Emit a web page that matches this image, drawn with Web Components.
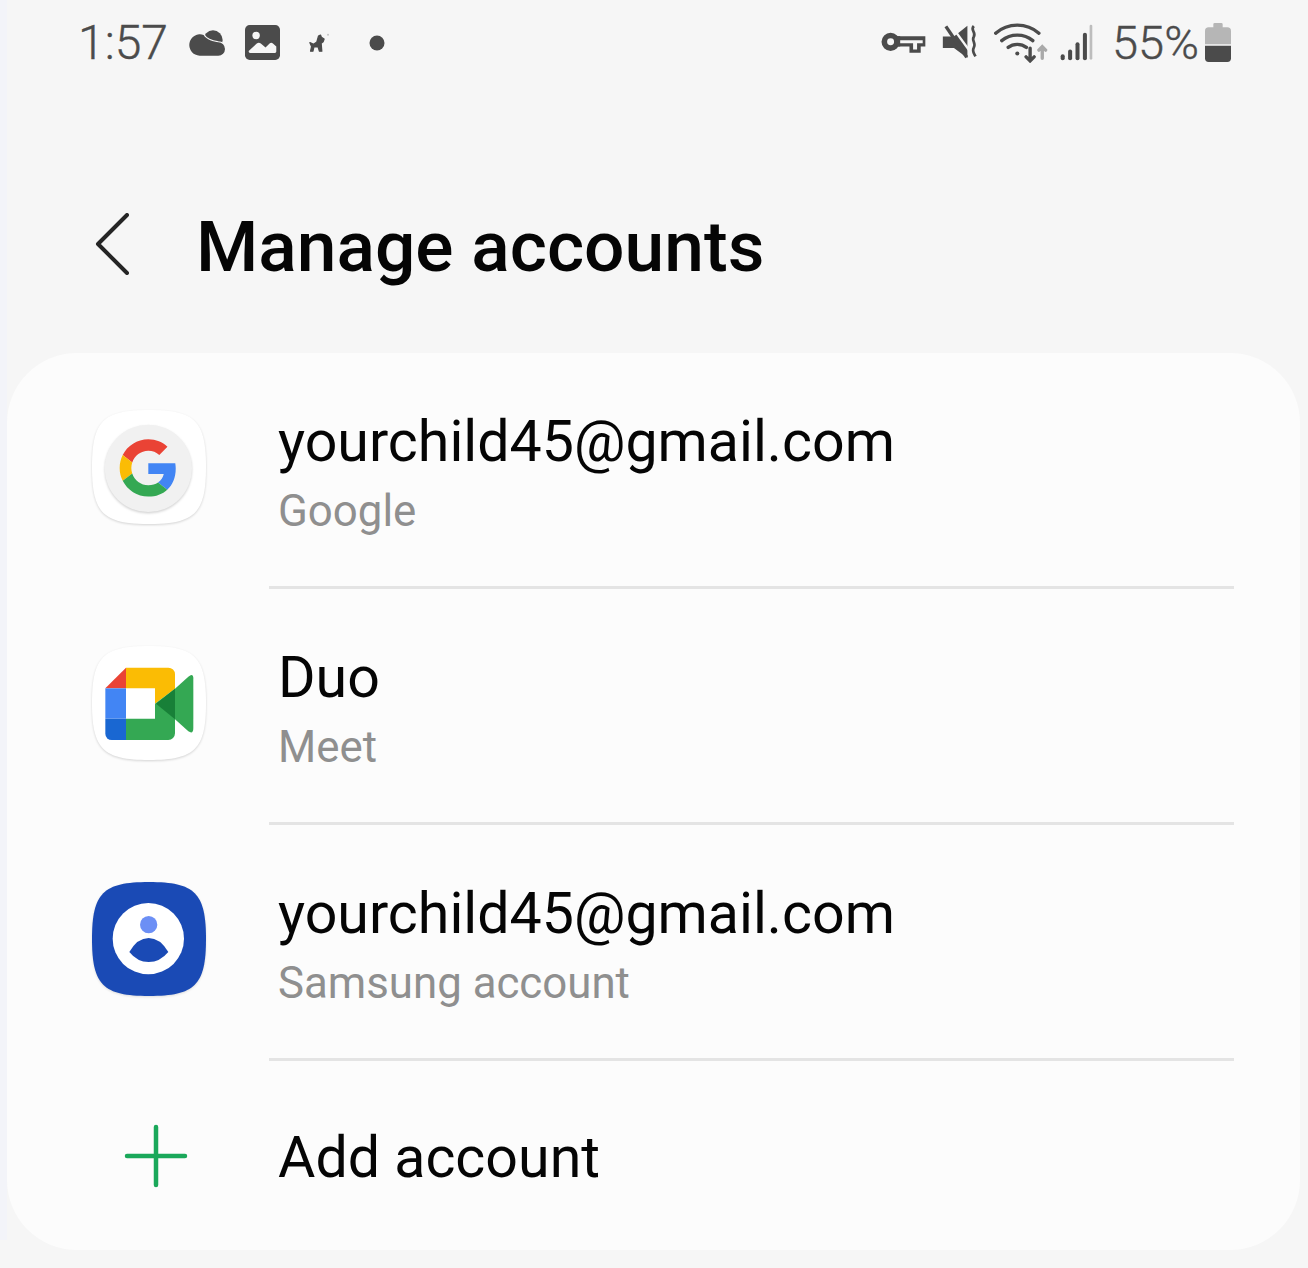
<!DOCTYPE html>
<html lang="en">
<head>
<meta charset="utf-8">
<title>Manage accounts</title>
<style>
  html, body { margin: 0; padding: 0; background: #f6f6f6; }
  body { width: 1308px; height: 1268px; overflow: hidden; font-family: Roboto, "Liberation Sans", sans-serif; background: linear-gradient(#f3f4f9, #f3f4f9) 0 0 / 7px 1240px no-repeat #f6f6f6; }
</style>
</head>
<body>
<template id="status-tmpl">
  <style>
    :host { display: flex; justify-content: space-between; align-items: center; height: 85px; padding: 0 77px 0 78px; color: #4b4b4b; }
    .group { display: flex; align-items: center; }
    .text { font-size: 48px; font-weight: 300; line-height: 85px; -webkit-text-stroke: 0.4px #4b4b4b; }
    svg { display: block; flex: none; }
  </style>
  <div class="group">
    <span class="text" style="width:110px">1:57</span>
    <svg width="37" height="26" viewBox="385 58 111 78" fill="#4b4b4b">
      <circle cx="460" cy="88" r="29"/>
      <path d="M420 135a32 32 0 1 1 12-62c8 14 30 20 44 22a20 20 0 0 1 0 40z" stroke="#f6f6f6" stroke-width="7" paint-order="stroke"/>
    </svg>
    <svg style="margin-left:20px" width="35" height="35" viewBox="557 47 104 104">
      <rect x="557" y="47" width="104" height="104" rx="14" fill="#4b4b4b"/>
      <circle cx="590" cy="78" r="11" fill="#f6f6f6"/>
      <path d="M568 124l24-22q6-5 12 0l14 12 12-12q5-4 10 0l10 9v15a4 4 0 0 1-4 4h-74a4 4 0 0 1-4-4z" fill="#f6f6f6"/>
    </svg>
    <svg style="margin-left:27px" width="23" height="22" viewBox="200 38 70 66" fill="#4b4b4b">
      <path d="M209 70l11 5 10-7 5-18 6-3 3 7 8 5-3 8-6 5 2 24h-7l-4-13h-13l-3 13h-7l3-14z" stroke="#4b4b4b" stroke-width="4" stroke-linejoin="round"/>
      <circle cx="264" cy="46" r="3" fill="#c4c4c4"/>
    </svg>
    <svg style="margin-left:39px" width="16" height="16" viewBox="0 0 16 16"><circle cx="8" cy="8" r="7.5" fill="#4b4b4b"/></svg>
  </div>
  <div class="group">
    <svg width="45" height="23" viewBox="18 38 136 68">
      <path d="M66 53H152V84H138V103H104V84H66Z" fill="#4b4b4b"/>
      <circle cx="47" cy="70" r="19" fill="#f6f6f6" stroke="#4b4b4b" stroke-width="17"/>
      <path d="M70 65H144V74H127V93H115V74H70Z" fill="#f6f6f6"/>
      <path d="M66 53H76V84H66Z" fill="#4b4b4b"/>
    </svg>
    <svg style="margin-left:16px" width="36" height="35" viewBox="203 22 106 104" fill="#4b4b4b">
      <path d="M205 56H238L278 24V120L238 90H205Z"/>
      <path d="M230 24L294 112" stroke="#f6f6f6" stroke-width="7" fill="none"/>
      <path d="M214 26L276 118" stroke="#4b4b4b" stroke-width="10" fill="none"/>
      <path d="M297 25c-12 12 8 18 0 32c-8 12 8 18 0 32c-6 10 0 16 5 26" stroke="#4b4b4b" stroke-width="8" fill="none"/>
    </svg>
    <svg style="margin-left:16px" width="54" height="40" viewBox="375 38 160 118" fill="none" stroke="#4b4b4b" stroke-width="10" stroke-linecap="round">
      <path d="M380 68c36-32 92-32 128 0"/>
      <path d="M398 90c26-22 66-22 92 0"/>
      <path d="M417 110c15-12 39-12 54 0"/>
      <circle cx="444" cy="128" r="6" fill="#4b4b4b" stroke="none"/>
      <path d="M482 112v36M470 138l12 12 12-12"/>
      <path d="M518 142v-34M508 118l10-10 10 10" stroke="#a9a9a9"/>
    </svg>
    <svg style="margin-left:12px" width="33" height="37" viewBox="570 42 98 110" fill="none" stroke-width="12" stroke-linecap="round">
      <path d="M578 138v6" stroke="#4b4b4b"/>
      <path d="M600 124v20" stroke="#4b4b4b"/>
      <path d="M622 102v42" stroke="#4b4b4b"/>
      <path d="M644 74v70" stroke="#4b4b4b"/>
      <path d="M662 48v96" stroke="#bdbdbd" stroke-width="8"/>
    </svg>
    <span class="text" style="margin-left:19px;width:93px;font-size:47px">55%</span>
    <svg width="26" height="39" viewBox="1005 40 78 117">
      <path d="M1032 40h22a4 4 0 0 1 4 4v9h14a11 11 0 0 1 11 11v40h-78V64a11 11 0 0 1 11-11h14v-9a4 4 0 0 1 4-4z" fill="#b6b6b6"/>
      <path d="M1005 108h78v38a11 11 0 0 1-11 11h-56a11 11 0 0 1-11-11z" fill="#4b4b4b"/>
    </svg>
  </div>
</template>

<template id="header-tmpl">
  <style>
    :host { display: flex; align-items: center; height: 268px; box-sizing: border-box; padding: 50px 0 0 94px; }
    svg { display: block; flex: none; }
    h1 { margin: 6px 0 0 66px; font-size: 71.3px; font-weight: 500; color: #050505; line-height: 80px; white-space: nowrap; }
  </style>
  <svg width="36" height="62" viewBox="0 0 36 62" fill="none" stroke="#252525" stroke-width="4" stroke-linecap="round" stroke-linejoin="round">
    <path d="M33 2L4 31l29 29"/>
  </svg>
  <h1><slot></slot></h1>
</template>

<template id="card-tmpl">
  <style>
    :host { display: block; margin: 0 8px 0 7px; height: 897px; box-sizing: border-box; background: #fcfcfc; border-radius: 70px; overflow: hidden; }
  </style>
  <slot></slot>
</template>

<template id="row-tmpl">
  <style>
    :host { display: flex; height: 236px; box-sizing: border-box; padding-left: 85px; }
    :host([last]) { height: 190px; }
    .icon { flex: none; width: 114px; display: flex; justify-content: center; align-items: flex-start; padding-top: 57px; }
    .body { flex: 1; margin: 0 66px 0 63px; padding: 56px 0 0 9px; border-bottom: 3px solid #e4e4e4; box-sizing: border-box; }
    :host([last]) .body { border-bottom: none; padding-top: 64px; }
    .title { font-size: 57.3px; line-height: 66px; color: #050505; white-space: nowrap; }
    .sub { font-size: 43.8px; line-height: 52px; margin-top: 10px; color: #8f8f8f; white-space: nowrap; }
    ::slotted(svg) { display: block; overflow: visible; }
  </style>
  <div class="icon"><slot name="icon"></slot></div>
  <div class="body">
    <div class="title"></div>
    <div class="sub"></div>
  </div>
</template>

<status-bar></status-bar>
<page-header>Manage accounts</page-header>
<account-card>
  <account-row title-text="yourchild45@gmail.com" sub="Google">
    <svg slot="icon" width="114" height="114" viewBox="36 30 342 342">
      <path d="M207 30C345 30 378 63 378 201C378 339 345 372 207 372C69 372 36 339 36 201C36 63 69 30 207 30Z" fill="#fff" style="filter:drop-shadow(0 3px 3px rgba(0,0,0,.16))"/>
      <circle cx="205" cy="205" r="131" fill="#f1f1f1" style="filter:drop-shadow(0 4px 3px rgba(0,0,0,.18))"/>
      <g transform="translate(119 118) scale(3.58)">
        <path fill="#EA4335" d="M24 9.5c3.54 0 6.71 1.22 9.21 3.6l6.85-6.85C35.9 2.38 30.47 0 24 0 14.62 0 6.51 5.38 2.56 13.22l7.98 6.19C12.43 13.72 17.74 9.5 24 9.5z"/>
        <path fill="#4285F4" d="M46.98 24.55c0-1.57-.15-3.09-.38-4.55H24v9.02h12.94c-.58 2.96-2.26 5.48-4.78 7.18l7.73 6c4.51-4.18 7.09-10.36 7.09-17.65z"/>
        <path fill="#FBBC05" d="M10.53 28.59c-.48-1.45-.76-2.99-.76-4.59s.27-3.14.76-4.59l-7.98-6.19C.92 16.46 0 20.12 0 24c0 3.88.92 7.54 2.56 10.78l7.97-6.19z"/>
        <path fill="#34A853" d="M24 48c6.48 0 11.93-2.13 15.89-5.81l-7.73-6c-2.15 1.45-4.92 2.3-8.16 2.3-6.26 0-11.57-4.22-13.47-9.91l-7.98 6.19C6.51 42.62 14.62 48 24 48z"/>
      </g>
    </svg>
  </account-row>
  <account-row title-text="Duo" sub="Meet">
    <svg slot="icon" width="114" height="114" viewBox="36 30 342 342">
      <path d="M207 30C345 30 378 63 378 201C378 339 345 372 207 372C69 372 36 339 36 201C36 63 69 30 207 30Z" fill="#fff" style="filter:drop-shadow(0 3px 3px rgba(0,0,0,.16))"/>
      <path d="M138 95H265a20 20 0 0 1 20 20V158L225 203V157H138Z" fill="#fbbc04"/>
      <path d="M138 95V157H76Z" fill="#ea4335"/>
      <path d="M76 157H138V248H76Z" fill="#4285f4"/>
      <path d="M76 248H138V312H95a19 19 0 0 1-19-19Z" fill="#1967d2"/>
      <path d="M138 248H225V203L285 158V292a20 20 0 0 1-20 20H138Z" fill="#34a853"/>
      <path d="M228 203L285 158V250Z" fill="#188038"/>
      <path d="M285 158L325 122Q340 110 340 128V276Q340 296 325 286L285 250Z" fill="#34a853"/>
    </svg>
  </account-row>
  <account-row title-text="yourchild45@gmail.com" sub="Samsung account">
    <svg slot="icon" width="114" height="114" viewBox="36 30 342 342">
      <path d="M207 30C345 30 378 63 378 201C378 339 345 372 207 372C69 372 36 339 36 201C36 63 69 30 207 30Z" fill="#1a4ab5" style="filter:drop-shadow(0 3px 3px rgba(0,0,0,.12))"/>
      <circle cx="205" cy="200" r="107" fill="#fff"/>
      <circle cx="206" cy="158" r="26" fill="#6c8ff5"/>
      <path d="M148 240Q172 198 206 198Q240 198 265 240Q240 270 206 270Q172 270 148 240Z" fill="#1a4ab5"/>
    </svg>
  </account-row>
  <account-row last title-text="Add account">
    <svg slot="icon" width="64" height="64" viewBox="0 0 64 64" style="margin:6px 0 0 14px" fill="none" stroke="#1aa85a" stroke-width="4.5" stroke-linecap="round">
      <path d="M32 3v58M3 32h58"/>
    </svg>
  </account-row>
</account-card>

<script>
  class StatusBar extends HTMLElement {
    constructor() {
      super();
      this.attachShadow({ mode: "open" }).append(document.getElementById("status-tmpl").content.cloneNode(true));
    }
  }

  class PageHeader extends HTMLElement {
    constructor() {
      super();
      this.attachShadow({ mode: "open" }).append(document.getElementById("header-tmpl").content.cloneNode(true));
    }
  }

  class AccountCard extends HTMLElement {
    constructor() {
      super();
      this.attachShadow({ mode: "open" }).append(document.getElementById("card-tmpl").content.cloneNode(true));
    }
  }

  class AccountRow extends HTMLElement {
    constructor() {
      super();
      this.attachShadow({ mode: "open" }).append(document.getElementById("row-tmpl").content.cloneNode(true));
    }

    connectedCallback() {
      this.shadowRoot.querySelector(".title").textContent = this.getAttribute("title-text");
      const sub = this.shadowRoot.querySelector(".sub");
      if (this.hasAttribute("sub")) {
        sub.textContent = this.getAttribute("sub");
      } else {
        sub.remove();
      }
    }
  }

  customElements.define("status-bar", StatusBar);
  customElements.define("page-header", PageHeader);
  customElements.define("account-card", AccountCard);
  customElements.define("account-row", AccountRow);
</script>
</body>
</html>
